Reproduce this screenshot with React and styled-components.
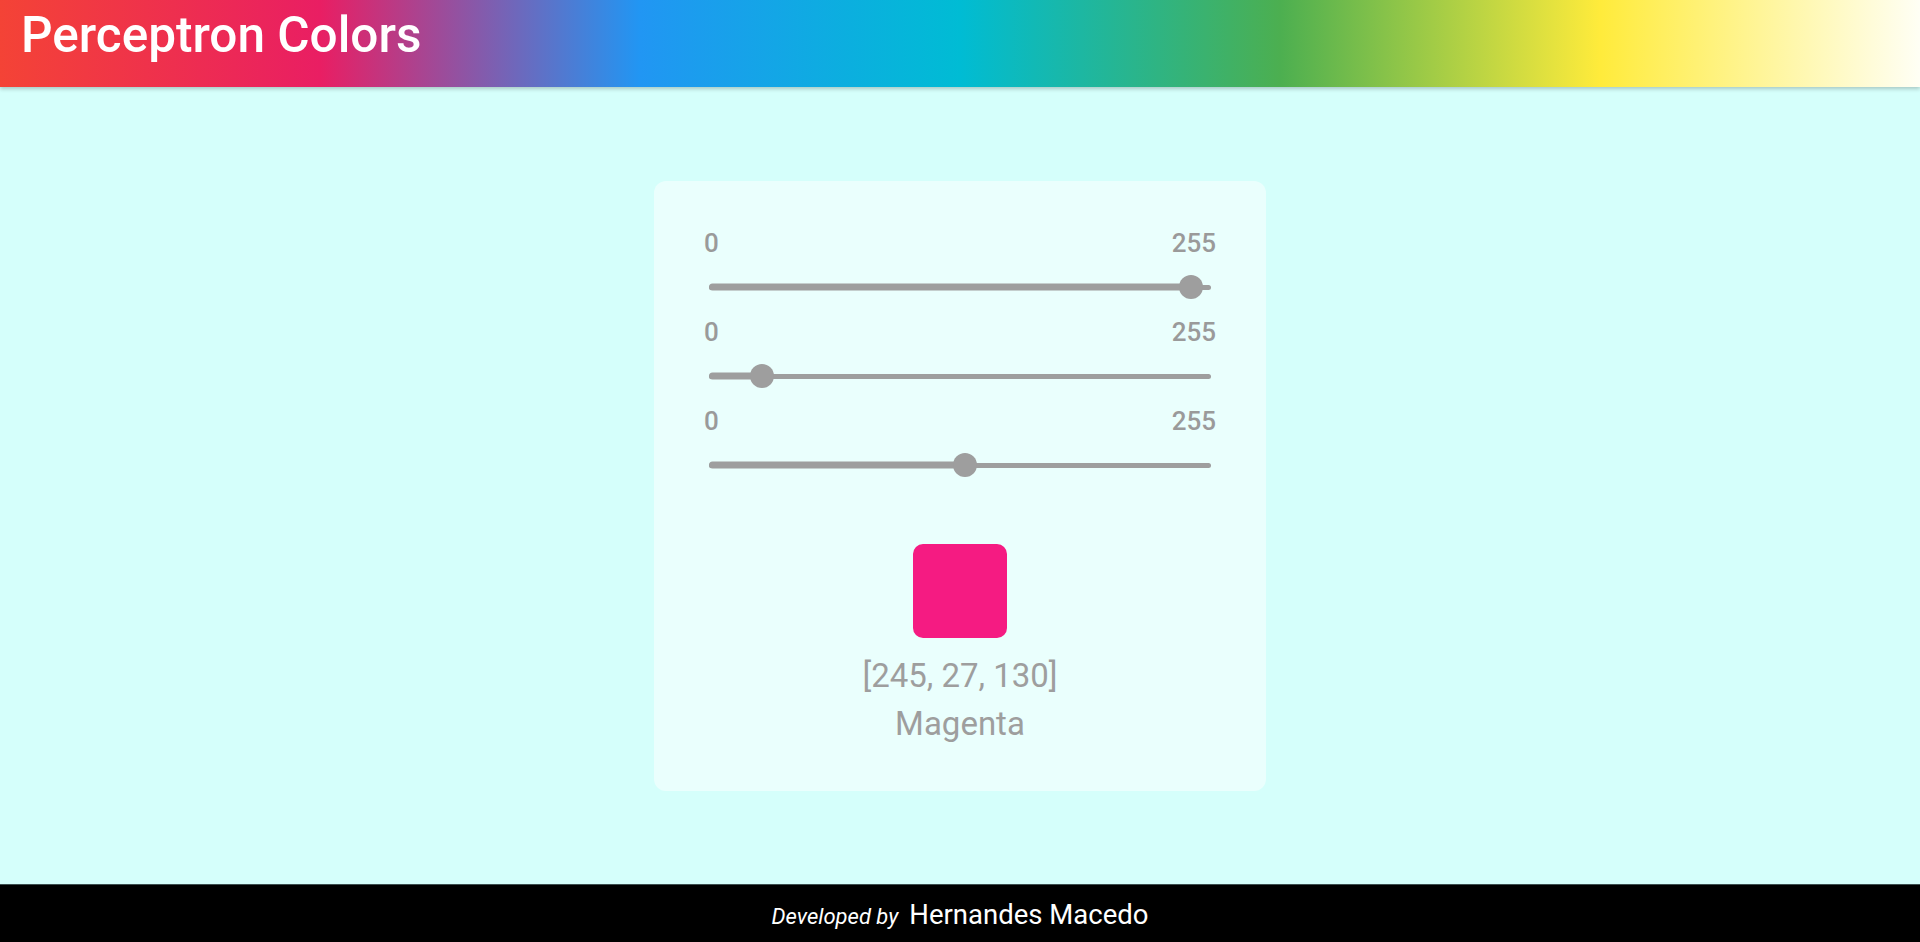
import React from 'react';
import styled, { createGlobalStyle } from 'styled-components';

const GlobalStyle = createGlobalStyle`
  * {
    box-sizing: border-box;
  }
  body {
    margin: 0;
    font-family: Roboto, 'Liberation Sans', sans-serif;
    background: #d5fffb;
  }
`;

const Page = styled.div`
  min-height: 100vh;
  display: flex;
  flex-direction: column;
`;

const Header = styled.header`
  height: 87px;
  padding: 5px 21px 0;
  background: linear-gradient(
    to right,
    #f44336,
    #e91e63,
    #2196f3,
    #00bcd4,
    #4caf50,
    #ffeb3b,
    #fffff5
  );
  box-shadow: 0 2px 4px rgba(0, 0, 0, 0.22);
  position: relative;
  z-index: 1;
`;

const Title = styled.h1`
  margin: 0;
  font-size: 49.5px;
  line-height: 60px;
  font-weight: 500;
  color: #fff;
`;

const Main = styled.main`
  flex: 1;
  display: flex;
  align-items: center;
  justify-content: center;
`;

const Card = styled.section`
  width: 612px;
  padding: 47px 50px 48px;
  background: #eafffd;
  border-radius: 12px;
  display: flex;
  flex-direction: column;
`;

const SliderRow = styled.div`
  display: flex;
  flex-direction: column;
`;

const Limits = styled.div`
  display: flex;
  justify-content: space-between;
  font-size: 26px;
  line-height: 30px;
  font-weight: 500;
  color: #9a9a9a;
`;

const TrackArea = styled.div`
  height: 59px;
  padding: 0 5px;
  display: flex;
  align-items: center;
`;

const Track = styled.div`
  position: relative;
  width: 100%;
  height: 5px;
  border-radius: 3px;
  background: #9e9e9e;
`;

const Fill = styled.div`
  position: absolute;
  left: 0;
  top: 50%;
  height: 7px;
  transform: translateY(-50%);
  border-radius: 4px;
  background: #9e9e9e;
`;

const Thumb = styled.div`
  position: absolute;
  top: 50%;
  width: 24px;
  height: 24px;
  margin-left: -12px;
  transform: translateY(-50%);
  border-radius: 50%;
  background: #9e9e9e;
`;

const Preview = styled.div`
  display: flex;
  flex-direction: column;
  align-items: center;
  margin-top: 49px;
`;

const Swatch = styled.div`
  width: 94px;
  height: 94px;
  border-radius: 10px;
  background: ${({ color }) => color};
`;

const Value = styled.div`
  margin-top: 19px;
  font-size: 33px;
  line-height: 38px;
  color: #9e9e9e;
`;

const Name = styled.div`
  margin-top: 10px;
  font-size: 33px;
  line-height: 38px;
  color: #9e9e9e;
`;

const Footer = styled.footer`
  height: 58px;
  background: #000;
  border-top: 1px solid #3d4f4f;
  display: flex;
  align-items: baseline;
  justify-content: center;
  padding-top: 13px;
  color: #fff;
`;

const By = styled.span`
  font-size: 22px;
  font-style: italic;
  margin-right: 11px;
`;

const Author = styled.span`
  font-size: 27.5px;
`;

const rgb = [245, 27, 130];

const Slider = ({ value }) => (
  <SliderRow>
    <Limits>
      <span>0</span>
      <span>255</span>
    </Limits>
    <TrackArea>
      <Track>
        <Fill style={{ width: `${(value / 255) * 100}%` }} />
        <Thumb style={{ left: `${(value / 255) * 100}%` }} />
      </Track>
    </TrackArea>
  </SliderRow>
);

const App = () => (
  <Page>
    <GlobalStyle />
    <Header>
      <Title>Perceptron Colors</Title>
    </Header>
    <Main>
      <Card>
        {rgb.map((v, i) => (
          <Slider key={i} value={v} />
        ))}
        <Preview>
          <Swatch color={`rgb(${rgb.join(',')})`} />
          <Value>[{rgb.join(', ')}]</Value>
          <Name>Magenta</Name>
        </Preview>
      </Card>
    </Main>
    <Footer>
      <By>Developed by</By>
      <Author>Hernandes Macedo</Author>
    </Footer>
  </Page>
);

export default App;
